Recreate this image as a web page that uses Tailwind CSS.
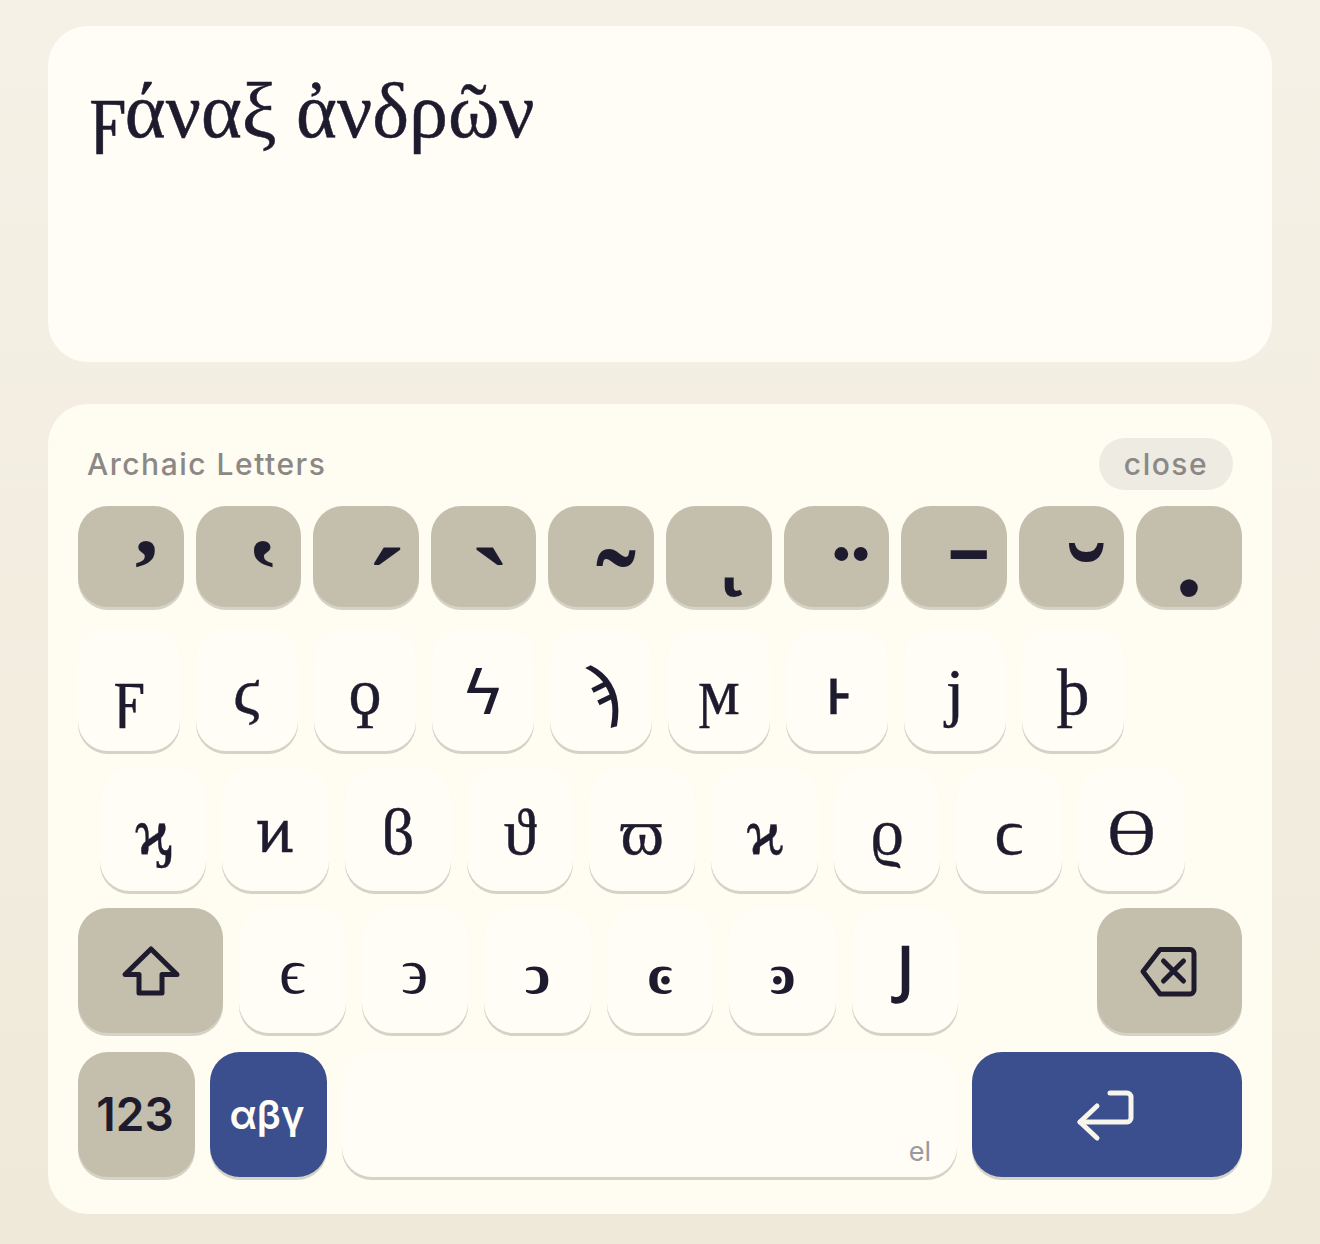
<!DOCTYPE html>
<html lang="el">
<head>
<meta charset="utf-8">
<script src="https://cdn.jsdelivr.net/npm/@tailwindcss/browser@4"></script>
</head>
<body class="m-0">
<div class="w-[1320px] h-[1244px] overflow-hidden bg-gradient-to-b from-[#f5f1e6] to-[#efe9d9] px-[48px] pt-[26px] font-['Inter',sans-serif] text-[#1e1b2e]">
  <div class="h-[336px] rounded-[40px] bg-[#fffdf6] pl-[42px] pt-[38px] font-['Liberation_Serif','DejaVu_Serif',serif] text-[78px] leading-[94px] [-webkit-text-stroke:0.5px]">ϝάναξ ἀνδρῶν</div>
  <div class="mt-[42px] h-[810px] rounded-[40px] bg-[#fffcf2] px-[30px] pt-[34px]">
    <div class="flex h-[52px] items-center justify-between pl-[9px] pr-[9px]">
      <span class="text-[30px] font-medium tracking-[1.5px] text-[#8b8885]">Archaic Letters</span>
      <span class="flex h-[52px] w-[134px] items-center justify-center rounded-full bg-[#eeebe3] text-[30px] font-medium tracking-[1.5px] text-[#8b8885]">close</span>
    </div>
    <div class="mt-[16px] flex h-[101px] gap-[12px] font-['Liberation_Serif',serif] text-[118px] font-bold leading-[100px]">
      <button class="flex flex-1 items-center justify-center rounded-[30px] bg-[#c4bfac] shadow-[0_3px_0_#d5d2c6]"><span class="translate-y-[34px]">&#160;̓</span></button>
      <button class="flex flex-1 items-center justify-center rounded-[30px] bg-[#c4bfac] shadow-[0_3px_0_#d5d2c6]"><span class="translate-y-[34px]">&#160;̔</span></button>
      <button class="flex flex-1 items-center justify-center rounded-[30px] bg-[#c4bfac] shadow-[0_3px_0_#d5d2c6]"><span class="translate-x-[20px] translate-y-[57px]">&#160;́</span></button>
      <button class="flex flex-1 items-center justify-center rounded-[30px] bg-[#c4bfac] shadow-[0_3px_0_#d5d2c6]"><span class="translate-x-[10px] translate-y-[57px]">&#160;̀</span></button>
      <button class="flex flex-1 items-center justify-center rounded-[30px] bg-[#c4bfac] shadow-[0_3px_0_#d5d2c6]"><span class="translate-y-[35px]">&#160;͂</span></button>
      <button class="flex flex-1 items-center justify-center rounded-[30px] bg-[#c4bfac] shadow-[0_3px_0_#d5d2c6]"><span class="-translate-y-[25px]">&#160;ͅ</span></button>
      <button class="flex flex-1 items-center justify-center rounded-[30px] bg-[#c4bfac] shadow-[0_3px_0_#d5d2c6]"><span class="translate-y-[31px]">&#160;̈</span></button>
      <button class="flex flex-1 items-center justify-center rounded-[30px] bg-[#c4bfac] shadow-[0_3px_0_#d5d2c6]"><span class="translate-y-[28px]">&#160;̄</span></button>
      <button class="flex flex-1 items-center justify-center rounded-[30px] bg-[#c4bfac] shadow-[0_3px_0_#d5d2c6]"><span class="translate-y-[31px]">&#160;̆</span></button>
      <button class="flex flex-1 items-center justify-center rounded-[30px] bg-[#c4bfac] shadow-[0_3px_0_#d5d2c6]"><span class="-translate-x-[15px] -translate-y-[22px]">&#160;̣</span></button>
    </div>
    <div class="mt-[21px] flex h-[123px] gap-[16px] font-['Liberation_Serif',serif] text-[66px] [-webkit-text-stroke:0.4px]">
      <button class="flex w-[102px] items-center justify-center rounded-[30px] bg-[#fffdf6] pt-[3px] shadow-[0_3px_0_#d5d2c6]">ϝ</button>
      <button class="flex w-[102px] items-center justify-center rounded-[30px] bg-[#fffdf6] pt-[3px] shadow-[0_3px_0_#d5d2c6]">ϛ</button>
      <button class="flex w-[102px] items-center justify-center rounded-[30px] bg-[#fffdf6] pt-[3px] shadow-[0_3px_0_#d5d2c6]">ϙ</button>
      <button class="flex w-[102px] items-center justify-center rounded-[30px] bg-[#fffdf6] pt-[3px] font-['Liberation_Sans',sans-serif] [-webkit-text-stroke:0px] shadow-[0_3px_0_#d5d2c6]">ϟ</button>
      <button class="flex w-[102px] items-center justify-center rounded-[30px] bg-[#fffdf6] pt-[3px] font-['Liberation_Sans',sans-serif] [-webkit-text-stroke:0px] shadow-[0_3px_0_#d5d2c6]">ϡ</button>
      <button class="flex w-[102px] items-center justify-center rounded-[30px] bg-[#fffdf6] pt-[3px] shadow-[0_3px_0_#d5d2c6]">ϻ</button>
      <button class="flex w-[102px] items-center justify-center rounded-[30px] bg-[#fffdf6] pt-[3px] shadow-[0_3px_0_#d5d2c6]">ͱ</button>
      <button class="flex w-[102px] items-center justify-center rounded-[30px] bg-[#fffdf6] pt-[3px] shadow-[0_3px_0_#d5d2c6]">ϳ</button>
      <button class="flex w-[102px] items-center justify-center rounded-[30px] bg-[#fffdf6] pt-[3px] shadow-[0_3px_0_#d5d2c6]">ϸ</button>
    </div>
    <div class="mt-[17px] flex h-[123px] gap-[16px] pl-[22px] font-['Liberation_Serif',serif] text-[66px] [-webkit-text-stroke:0.4px]">
      <button class="flex w-[106.3px] items-center justify-center rounded-[30px] bg-[#fffdf6] pt-[3px] shadow-[0_3px_0_#d5d2c6]">ϗ</button>
      <button class="flex w-[106.3px] items-center justify-center rounded-[30px] bg-[#fffdf6] pt-[3px] font-['DejaVu_Serif',serif] text-[60px] shadow-[0_3px_0_#d5d2c6]">ͷ</button>
      <button class="flex w-[106.3px] items-center justify-center rounded-[30px] bg-[#fffdf6] pt-[3px] shadow-[0_3px_0_#d5d2c6]">ϐ</button>
      <button class="flex w-[106.3px] items-center justify-center rounded-[30px] bg-[#fffdf6] pt-[3px] shadow-[0_3px_0_#d5d2c6]">ϑ</button>
      <button class="flex w-[106.3px] items-center justify-center rounded-[30px] bg-[#fffdf6] pt-[3px] shadow-[0_3px_0_#d5d2c6]">ϖ</button>
      <button class="flex w-[106.3px] items-center justify-center rounded-[30px] bg-[#fffdf6] pt-[3px] shadow-[0_3px_0_#d5d2c6]">ϰ</button>
      <button class="flex w-[106.3px] items-center justify-center rounded-[30px] bg-[#fffdf6] pt-[3px] shadow-[0_3px_0_#d5d2c6]">ϱ</button>
      <button class="flex w-[106.3px] items-center justify-center rounded-[30px] bg-[#fffdf6] pt-[3px] shadow-[0_3px_0_#d5d2c6]">ϲ</button>
      <button class="flex w-[106.3px] items-center justify-center rounded-[30px] bg-[#fffdf6] pt-[3px] shadow-[0_3px_0_#d5d2c6]">ϴ</button>
    </div>
    <div class="mt-[17px] flex h-[125px] gap-[16px] font-['Liberation_Serif',serif] text-[66px]">
      <button class="flex w-[145px] items-center justify-center rounded-[30px] bg-[#c4bfac] shadow-[0_3px_0_#d5d2c6]"><svg width="64" height="64" viewBox="0 0 64 64" fill="none" stroke="#1e1b2e" stroke-width="5" stroke-linecap="round" stroke-linejoin="round"><path d="M32 10 6 35.5h14V54h23V35.5h15z"/></svg></button>
      <button class="flex flex-1 items-center justify-center rounded-[30px] bg-[#fffdf6] shadow-[0_3px_0_#d5d2c6]">ϵ</button>
      <button class="flex flex-1 items-center justify-center rounded-[30px] bg-[#fffdf6] shadow-[0_3px_0_#d5d2c6]">϶</button>
      <button class="flex flex-1 items-center justify-center rounded-[30px] bg-[#fffdf6] pt-[6px] text-[58px] font-bold shadow-[0_3px_0_#d5d2c6]">ͻ</button>
      <button class="flex flex-1 items-center justify-center rounded-[30px] bg-[#fffdf6] pt-[6px] text-[58px] font-bold shadow-[0_3px_0_#d5d2c6]">ͼ</button>
      <button class="flex flex-1 items-center justify-center rounded-[30px] bg-[#fffdf6] pt-[6px] text-[58px] font-bold shadow-[0_3px_0_#d5d2c6]">ͽ</button>
      <button class="flex flex-1 items-center justify-center rounded-[30px] bg-[#fffdf6] text-[62px] font-bold shadow-[0_3px_0_#d5d2c6]">Ϳ</button>
      <div class="flex-1"></div>
      <button class="flex w-[145px] items-center justify-center rounded-[30px] bg-[#c4bfac] shadow-[0_3px_0_#d5d2c6]"><svg width="64" height="64" viewBox="0 0 64 64" fill="none" stroke="#1e1b2e" stroke-width="5" stroke-linecap="round" stroke-linejoin="round"><path d="M22 10.5h30a4 4 0 0 1 4 4V51a4 4 0 0 1-4 4H22L5 32.5z"/><path d="m25.5 22 20 20M45.5 22l-20 20"/></svg></button>
    </div>
    <div class="mt-[19px] flex h-[125px] gap-[15px]">
      <button class="flex w-[117px] items-center justify-center rounded-[30px] bg-[#c4bfac] pr-[3px] text-[46px] font-semibold shadow-[0_3px_0_#d5d2c6]">123</button>
      <button class="flex w-[117px] items-center justify-center rounded-[30px] bg-[#3b4f8f] pr-[3px] text-[40px] font-semibold text-[#fffdf6] shadow-[0_3px_0_#d5d2c6]">αβγ</button>
      <button class="relative flex-1 rounded-[30px] bg-[#fffdf6] shadow-[0_3px_0_#d5d2c6]"><span class="absolute right-[26px] bottom-[5px] text-[27px] text-[#9a9a9e]">el</span></button>
      <button class="flex w-[270px] items-center justify-center rounded-[30px] bg-[#3b4f8f] shadow-[0_3px_0_#d5d2c6]"><svg width="64" height="64" viewBox="0 0 64 64" fill="none" stroke="#f8f5ec" stroke-width="5" stroke-linecap="round" stroke-linejoin="round"><path d="M35 10h17a4 4 0 0 1 4 4v21a4 4 0 0 1-4 4H5"/><path d="M22 23 5 39l17 16"/></svg></button>
    </div>
  </div>
</div>
</body>
</html>
